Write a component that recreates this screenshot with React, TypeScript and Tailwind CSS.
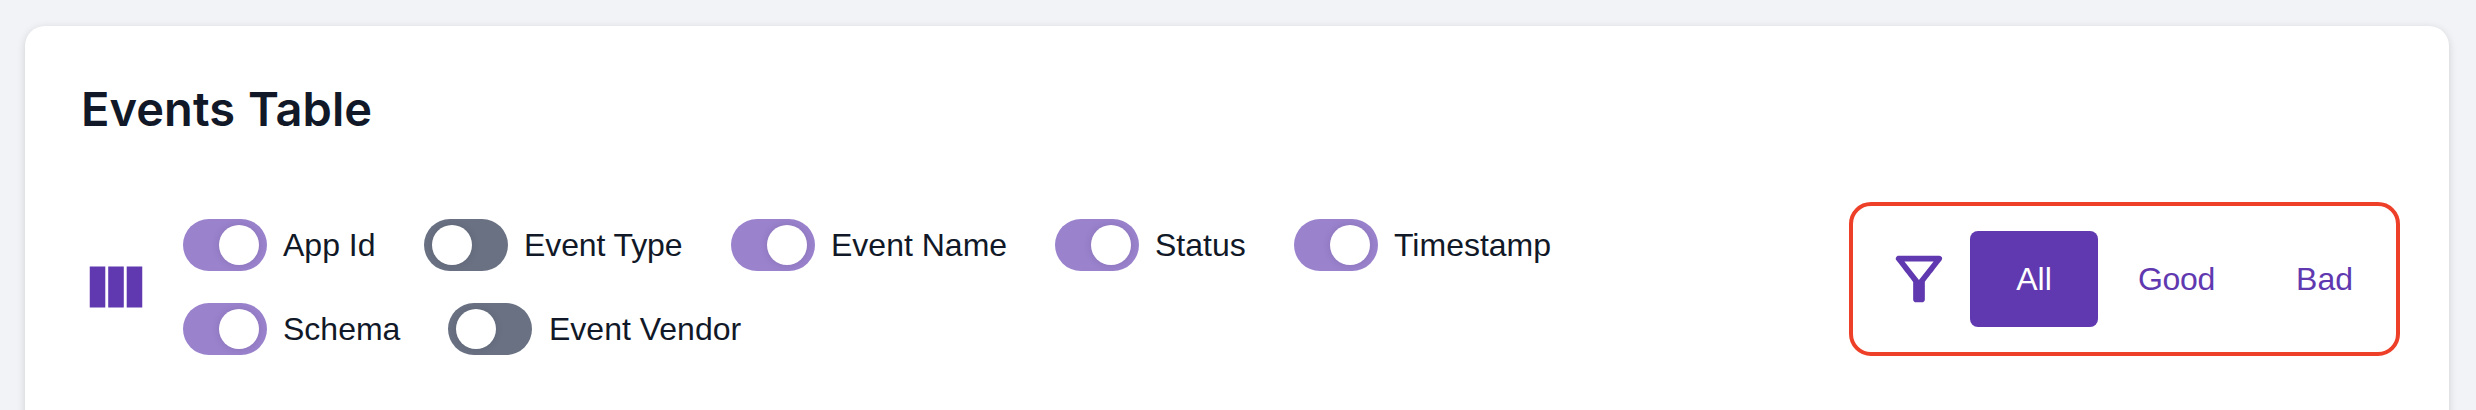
const toggles = [
  [
    { label: "App Id", on: true, width: "w-[93px]" },
    { label: "Event Type", on: false, width: "w-[159px] tracking-[-0.1px]" },
    { label: "Event Name", on: true, width: "w-[176px]" },
    { label: "Status", on: true, width: "w-[91px]" },
    { label: "Timestamp", on: true, width: "w-[157px]" },
  ],
  [
    { label: "Schema", on: true, width: "w-[117px]" },
    { label: "Event Vendor", on: false, width: "w-[193px] pl-px" },
  ],
];

function Toggle({ label, on, width }: { label: string; on: boolean; width: string }) {
  return (
    <div className="flex h-[52px] items-center gap-4">
      <button
        role="switch"
        aria-checked={on}
        aria-label={label}
        className={
          on
            ? "flex h-[52px] w-[84px] items-center justify-end rounded-full bg-[#9a82cd] px-2"
            : "flex h-[52px] w-[84px] items-center justify-start rounded-full bg-[#697183] px-2"
        }
      >
        <span className="size-10 rounded-full bg-white shadow-[0_0_8px_rgba(0,0,0,0.11)]" />
      </button>
      <span className={`${width} whitespace-nowrap text-[32px] leading-[52px]`}>{label}</span>
    </div>
  );
}

export default function App() {
  return (
    <div className="h-[410px] overflow-hidden bg-[#f2f3f7] pl-[25px] pr-[27px] pt-[26px] font-['Liberation_Sans',Arial,sans-serif] text-[#111827]">
      <div className="h-[480px] rounded-[20px] bg-white px-14 pt-[51px] shadow-[0_2px_8px_rgba(0,0,0,0.14)]">
        <h1 className="h-16 whitespace-nowrap font-[Inter,sans-serif] text-[47px] font-semibold leading-[64px] tracking-[0.05px] [word-spacing:1px]">
          Events Table
        </h1>
        <div className="flex items-start justify-between pt-[61px] -mr-[7px]">
          <div className="flex items-center gap-8 pt-[17px]">
            <svg viewBox="0 0 24 24" className="size-[70px] fill-[#6039b0]">
              <path d="M14.67 5v14H9.33V5h5.34zm1 14H21V5h-5.33v14zm-7.34 0V5H3v14h5.33z" />
            </svg>
            <div className="flex flex-col gap-8">
              {toggles.map((row, i) => (
                <div key={i} className="flex gap-12">
                  {row.map((t) => (
                    <Toggle key={t.label} {...t} />
                  ))}
                </div>
              ))}
            </div>
          </div>
          <div className="flex h-[154px] w-[551px] items-center rounded-[22px] border-4 border-[#ee4028] pl-[31px] text-[32px] text-[#6039b0]">
            <svg viewBox="0 0 24 24" className="mr-4 size-[70px] shrink-0 fill-current">
              <path d="M7 6h10l-5.01 6.3L7 6zm-2.75-.39C6.27 8.2 10 13 10 13v6c0 .55.45 1 1 1h2c.55 0 1-.45 1-1v-6s3.72-4.8 5.74-7.39A.998.998 0 0 0 18.95 4H5.04c-.83 0-1.3.95-.79 1.61z" />
            </svg>
            <button className="h-24 w-32 shrink-0 rounded-lg bg-[#6039b0] text-white">All</button>
            <button className="h-24 pl-10 pr-[41px] tracking-[-0.3px]">Good</button>
            <button className="h-24 px-10">Bad</button>
          </div>
        </div>
      </div>
    </div>
  );
}
